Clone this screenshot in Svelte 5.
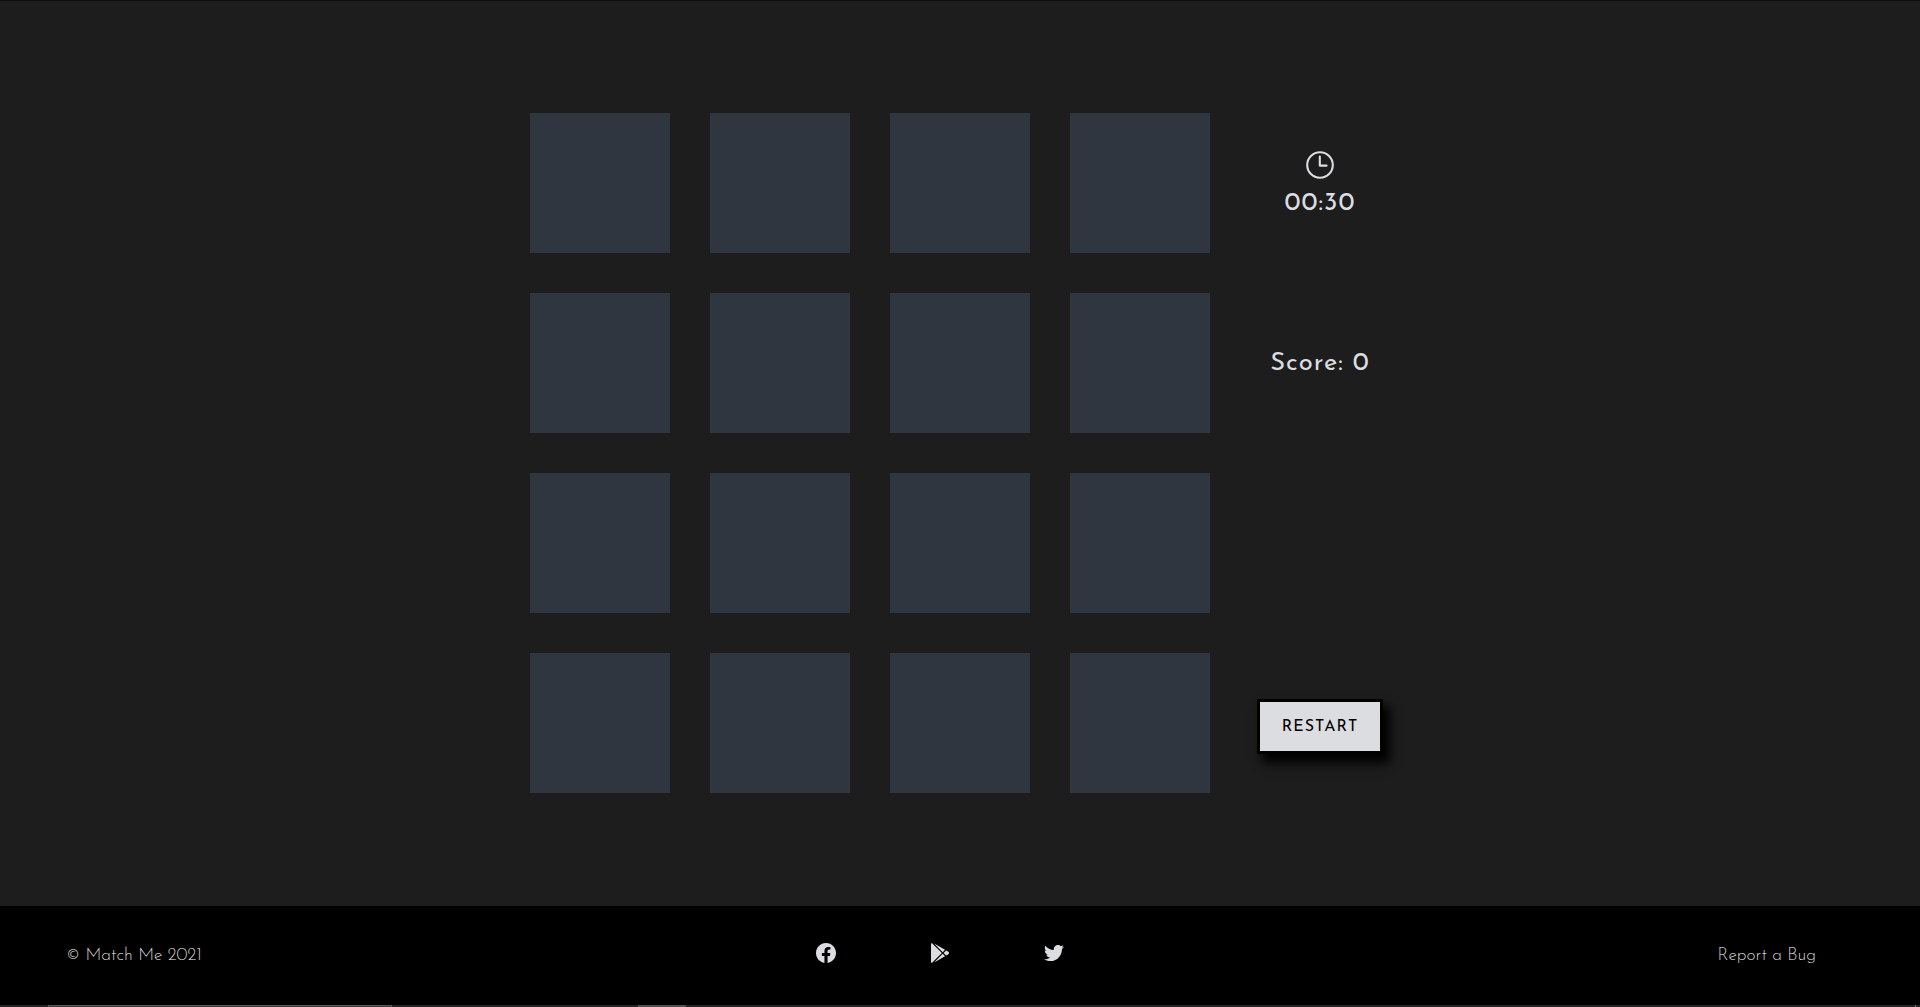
<script>
  const tiles = Array.from({ length: 16 }, (_, i) => i);
  let score = $state(0);
  let time = $state('00:30');
  const restart = () => {
    score = 0;
    time = '00:30';
  };
</script>

<div class="page">
  <main>
    <div class="board">
      {#each tiles as tile (tile)}
        <div class="tile"></div>
      {/each}
    </div>
    <aside>
      <div class="cell timer">
        <svg class="clock" viewBox="0 0 28 28" fill="none" stroke="currentColor">
          <circle cx="14" cy="14" r="12.8" stroke-width="2.1" />
          <path d="M13.8 5.6V14.6H20.6" stroke-width="2.1" stroke-linecap="round" stroke-linejoin="round" />
        </svg>
        <span class="time">{time}</span>
      </div>
      <div class="cell tally"><span class="score">Score: {score}</span></div>
      <div class="cell"></div>
      <div class="cell action"><button onclick={restart}>RESTART</button></div>
    </aside>
  </main>
  <footer>
    <span class="copy">© Match Me 2021</span>
    <nav>
      <svg viewBox="0 0 16 16" fill="currentColor"><path d="M16 8.049c0-4.446-3.582-8.05-8-8.05C3.58 0-.002 3.603-.002 8.05c0 4.017 2.926 7.347 6.75 7.951v-5.625h-2.03V8.05H6.75V6.275c0-2.017 1.195-3.131 3.022-3.131.876 0 1.791.157 1.791.157v1.98h-1.009c-.993 0-1.303.621-1.303 1.258v1.51h2.218l-.354 2.326H9.25V16c3.824-.604 6.75-3.934 6.75-7.951z" /></svg>
      <svg viewBox="0 0 512 512" fill="currentColor"><path d="M325.3 234.3 104.6 13l280.8 161.2-60.1 60.1zM47 0C34 6.8 25.3 19.2 25.3 35.3v441.3c0 16.1 8.7 28.5 21.7 35.3l256.6-256L47 0zm425.2 225.6-58.9-34.1-65.7 64.5 65.7 64.5 60.1-34.1c18-14.3 18-46.5-1.2-60.8zM104.6 499l280.8-161.2-60.1-60.1L104.6 499z" /></svg>
      <svg viewBox="0 0 512 512" fill="currentColor"><path d="M459.37 151.716c.325 4.548.325 9.097.325 13.645 0 138.72-105.583 298.558-298.558 298.558-59.452 0-114.68-17.219-161.137-47.106 8.447.974 16.568 1.299 25.34 1.299 49.055 0 94.213-16.568 130.274-44.832-46.132-.975-84.792-31.188-98.112-72.772 6.498.974 12.995 1.624 19.818 1.624 9.421 0 18.843-1.3 27.614-3.573-48.081-9.747-84.143-51.98-84.143-102.985v-1.299c13.969 7.797 30.214 12.67 47.431 13.319-28.264-18.843-46.781-51.005-46.781-87.391 0-19.492 5.197-37.36 14.294-52.954 51.655 63.675 129.3 105.258 216.365 109.807-1.624-7.797-2.599-15.918-2.599-24.04 0-57.828 46.782-104.934 104.934-104.934 30.213 0 57.502 12.67 76.67 33.137 23.715-4.548 46.456-13.32 66.599-25.34-7.798 24.366-24.366 44.833-46.132 57.827 21.117-2.273 41.584-8.122 60.426-16.243-14.292 20.791-32.161 39.308-52.628 54.253z" /></svg>
    </nav>
    <span class="report">Report a Bug</span>
  </footer>
  <div class="strip"><i class="wide"></i><i class="short"></i><i class="tick"></i></div>
</div>

<style>
  :global(body) {
    margin: 0;
    background: #1d1d1d;
  }
  .page {
    height: 1007px;
    display: flex;
    flex-direction: column;
    overflow: hidden;
    box-shadow: inset 0 1px #0c0c0c;
    color: #dcdde1;
    font-family: "Josefin Sans", Lato, sans-serif;
  }
  main {
    flex: 1;
    display: flex;
    justify-content: center;
    align-items: center;
    gap: 40px;
  }
  .board {
    display: grid;
    grid-template-columns: repeat(4, 140px);
    grid-auto-rows: 140px;
    gap: 40px;
  }
  .tile {
    background: #2f3640;
  }
  aside {
    width: 140px;
    display: grid;
    grid-auto-rows: 140px;
    gap: 40px;
  }
  .cell {
    box-sizing: border-box;
    display: flex;
    flex-direction: column;
    align-items: center;
    justify-content: center;
    white-space: nowrap;
  }
  .clock {
    width: 28px;
    height: 28px;
    margin-bottom: 10px;
  }
  .time,
  .score {
    font-size: 25.6px;
    font-weight: 400;
    line-height: 30px;
    letter-spacing: 1px;
  }
  .timer {
    padding-top: 3px;
  }
  .tally {
    padding-top: 2px;
  }
  .action {
    padding-top: 6px;
  }
  button {
    box-sizing: border-box;
    width: 126px;
    height: 55px;
    padding: 2px 0 0;
    border: 3px solid #000;
    background: #dcdde1;
    color: #000;
    box-shadow: 6px 8px 10px 1px #000;
    font: 400 16px "Josefin Sans", Lato, sans-serif;
    letter-spacing: 1px;
  }
  footer {
    box-sizing: border-box;
    height: 99px;
    padding: 0 104px 0 66px;
    background: #000;
    display: grid;
    grid-template-columns: 1fr auto 1fr;
    align-items: center;
    font-size: 17.6px;
    font-weight: 200;
  }
  .copy,
  .report {
    color: #fff;
  }
  nav {
    display: flex;
    gap: 94px;
    padding: 0 2px 5px 0;
  }
  nav svg {
    width: 20px;
    height: 20px;
  }
  .report {
    text-align: right;
  }
  .strip {
    height: 2px;
    display: flex;
    background: #242323;
  }
  .wide {
    box-sizing: border-box;
    width: 344px;
    margin-left: 48px;
    border: 1px solid #5a5a5a;
    border-bottom: 0;
    background: #383838;
  }
  .short {
    width: 48px;
    margin-left: 246px;
    background: #505050;
  }
  .tick {
    width: 1px;
    margin: 0 4px 0 auto;
    background: #777;
  }
</style>
